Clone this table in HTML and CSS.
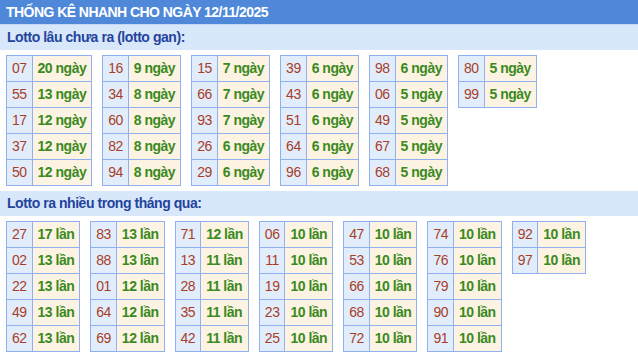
FILE: index.html
```html
<!DOCTYPE html>
<html lang="vi">
<head>
<meta charset="utf-8">
<title>Thống kê nhanh</title>
<link rel="stylesheet" href="styles.css">
</head>
<body>
<div class="box">
  <div class="title">THỐNG KÊ NHANH CHO NGÀY 12/11/2025</div>
  <div class="sec-head">Lotto lâu chưa ra (lotto gan):</div>
  <div class="tables">
    <table><tr><td class="n">07</td><td class="v">20 ngày</td></tr><tr><td class="n">55</td><td class="v">13 ngày</td></tr><tr><td class="n">17</td><td class="v">12 ngày</td></tr><tr><td class="n">37</td><td class="v">12 ngày</td></tr><tr><td class="n">50</td><td class="v">12 ngày</td></tr></table>
    <table><tr><td class="n">16</td><td class="v">9 ngày</td></tr><tr><td class="n">34</td><td class="v">8 ngày</td></tr><tr><td class="n">60</td><td class="v">8 ngày</td></tr><tr><td class="n">82</td><td class="v">8 ngày</td></tr><tr><td class="n">94</td><td class="v">8 ngày</td></tr></table>
    <table><tr><td class="n">15</td><td class="v">7 ngày</td></tr><tr><td class="n">66</td><td class="v">7 ngày</td></tr><tr><td class="n">93</td><td class="v">7 ngày</td></tr><tr><td class="n">26</td><td class="v">6 ngày</td></tr><tr><td class="n">29</td><td class="v">6 ngày</td></tr></table>
    <table><tr><td class="n">39</td><td class="v">6 ngày</td></tr><tr><td class="n">43</td><td class="v">6 ngày</td></tr><tr><td class="n">51</td><td class="v">6 ngày</td></tr><tr><td class="n">64</td><td class="v">6 ngày</td></tr><tr><td class="n">96</td><td class="v">6 ngày</td></tr></table>
    <table><tr><td class="n">98</td><td class="v">6 ngày</td></tr><tr><td class="n">06</td><td class="v">5 ngày</td></tr><tr><td class="n">49</td><td class="v">5 ngày</td></tr><tr><td class="n">67</td><td class="v">5 ngày</td></tr><tr><td class="n">68</td><td class="v">5 ngày</td></tr></table>
    <table><tr><td class="n">80</td><td class="v">5 ngày</td></tr><tr><td class="n">99</td><td class="v">5 ngày</td></tr></table>
  </div>
  <div class="sec-head">Lotto ra nhiều trong tháng qua:</div>
  <div class="tables">
    <table><tr><td class="n">27</td><td class="v">17 lần</td></tr><tr><td class="n">02</td><td class="v">13 lần</td></tr><tr><td class="n">22</td><td class="v">13 lần</td></tr><tr><td class="n">49</td><td class="v">13 lần</td></tr><tr><td class="n">62</td><td class="v">13 lần</td></tr></table>
    <table><tr><td class="n">83</td><td class="v">13 lần</td></tr><tr><td class="n">88</td><td class="v">13 lần</td></tr><tr><td class="n">01</td><td class="v">12 lần</td></tr><tr><td class="n">64</td><td class="v">12 lần</td></tr><tr><td class="n">69</td><td class="v">12 lần</td></tr></table>
    <table><tr><td class="n">71</td><td class="v">12 lần</td></tr><tr><td class="n">13</td><td class="v">11 lần</td></tr><tr><td class="n">28</td><td class="v">11 lần</td></tr><tr><td class="n">35</td><td class="v">11 lần</td></tr><tr><td class="n">42</td><td class="v">11 lần</td></tr></table>
    <table><tr><td class="n">06</td><td class="v">10 lần</td></tr><tr><td class="n">11</td><td class="v">10 lần</td></tr><tr><td class="n">19</td><td class="v">10 lần</td></tr><tr><td class="n">23</td><td class="v">10 lần</td></tr><tr><td class="n">25</td><td class="v">10 lần</td></tr></table>
    <table><tr><td class="n">47</td><td class="v">10 lần</td></tr><tr><td class="n">53</td><td class="v">10 lần</td></tr><tr><td class="n">66</td><td class="v">10 lần</td></tr><tr><td class="n">68</td><td class="v">10 lần</td></tr><tr><td class="n">72</td><td class="v">10 lần</td></tr></table>
    <table><tr><td class="n">74</td><td class="v">10 lần</td></tr><tr><td class="n">76</td><td class="v">10 lần</td></tr><tr><td class="n">79</td><td class="v">10 lần</td></tr><tr><td class="n">90</td><td class="v">10 lần</td></tr><tr><td class="n">91</td><td class="v">10 lần</td></tr></table>
    <table><tr><td class="n">92</td><td class="v">10 lần</td></tr><tr><td class="n">97</td><td class="v">10 lần</td></tr></table>
  </div>
</div>
</body>
</html>
```

FILE: styles.css
```css
html, body {
  margin: 0;
  padding: 0;
  background: #ffffff;
}
.box {
  font-family: "Liberation Sans", Arial, sans-serif;
  font-size: 14px;
}
.title {
  height: 24px;
  line-height: 24px;
  padding-left: 6px;
  background: #4f88d9;
  color: #ffffff;
  font-weight: bold;
  letter-spacing: -0.55px;
  border-bottom: 1px solid #c3d6f3;
}
.sec-head {
  height: 25px;
  line-height: 25px;
  padding-left: 7px;
  background: #d9e7fb;
  color: #23449c;
  font-weight: bold;
  letter-spacing: -0.45px;
}
.tables {
  display: flex;
  align-items: flex-start;
  gap: 10px;
  padding: 5px 0 5px 6px;
}
table {
  border-collapse: separate;
  border-spacing: 0;
  border-top: 1px solid #90b0ef;
  border-left: 1px solid #90b0ef;
}
td {
  height: 25px;
  line-height: 25px;
  padding: 0 5px;
  border-right: 1px solid #90b0ef;
  border-bottom: 1px solid #90b0ef;
  white-space: nowrap;
  letter-spacing: -0.5px;
}
td.n {
  background: #e2edfc;
  color: #a83e28;
  text-align: center;
}
td.v {
  background: #fdf3e3;
  color: #3a8a1e;
  font-weight: bold;
}
```
